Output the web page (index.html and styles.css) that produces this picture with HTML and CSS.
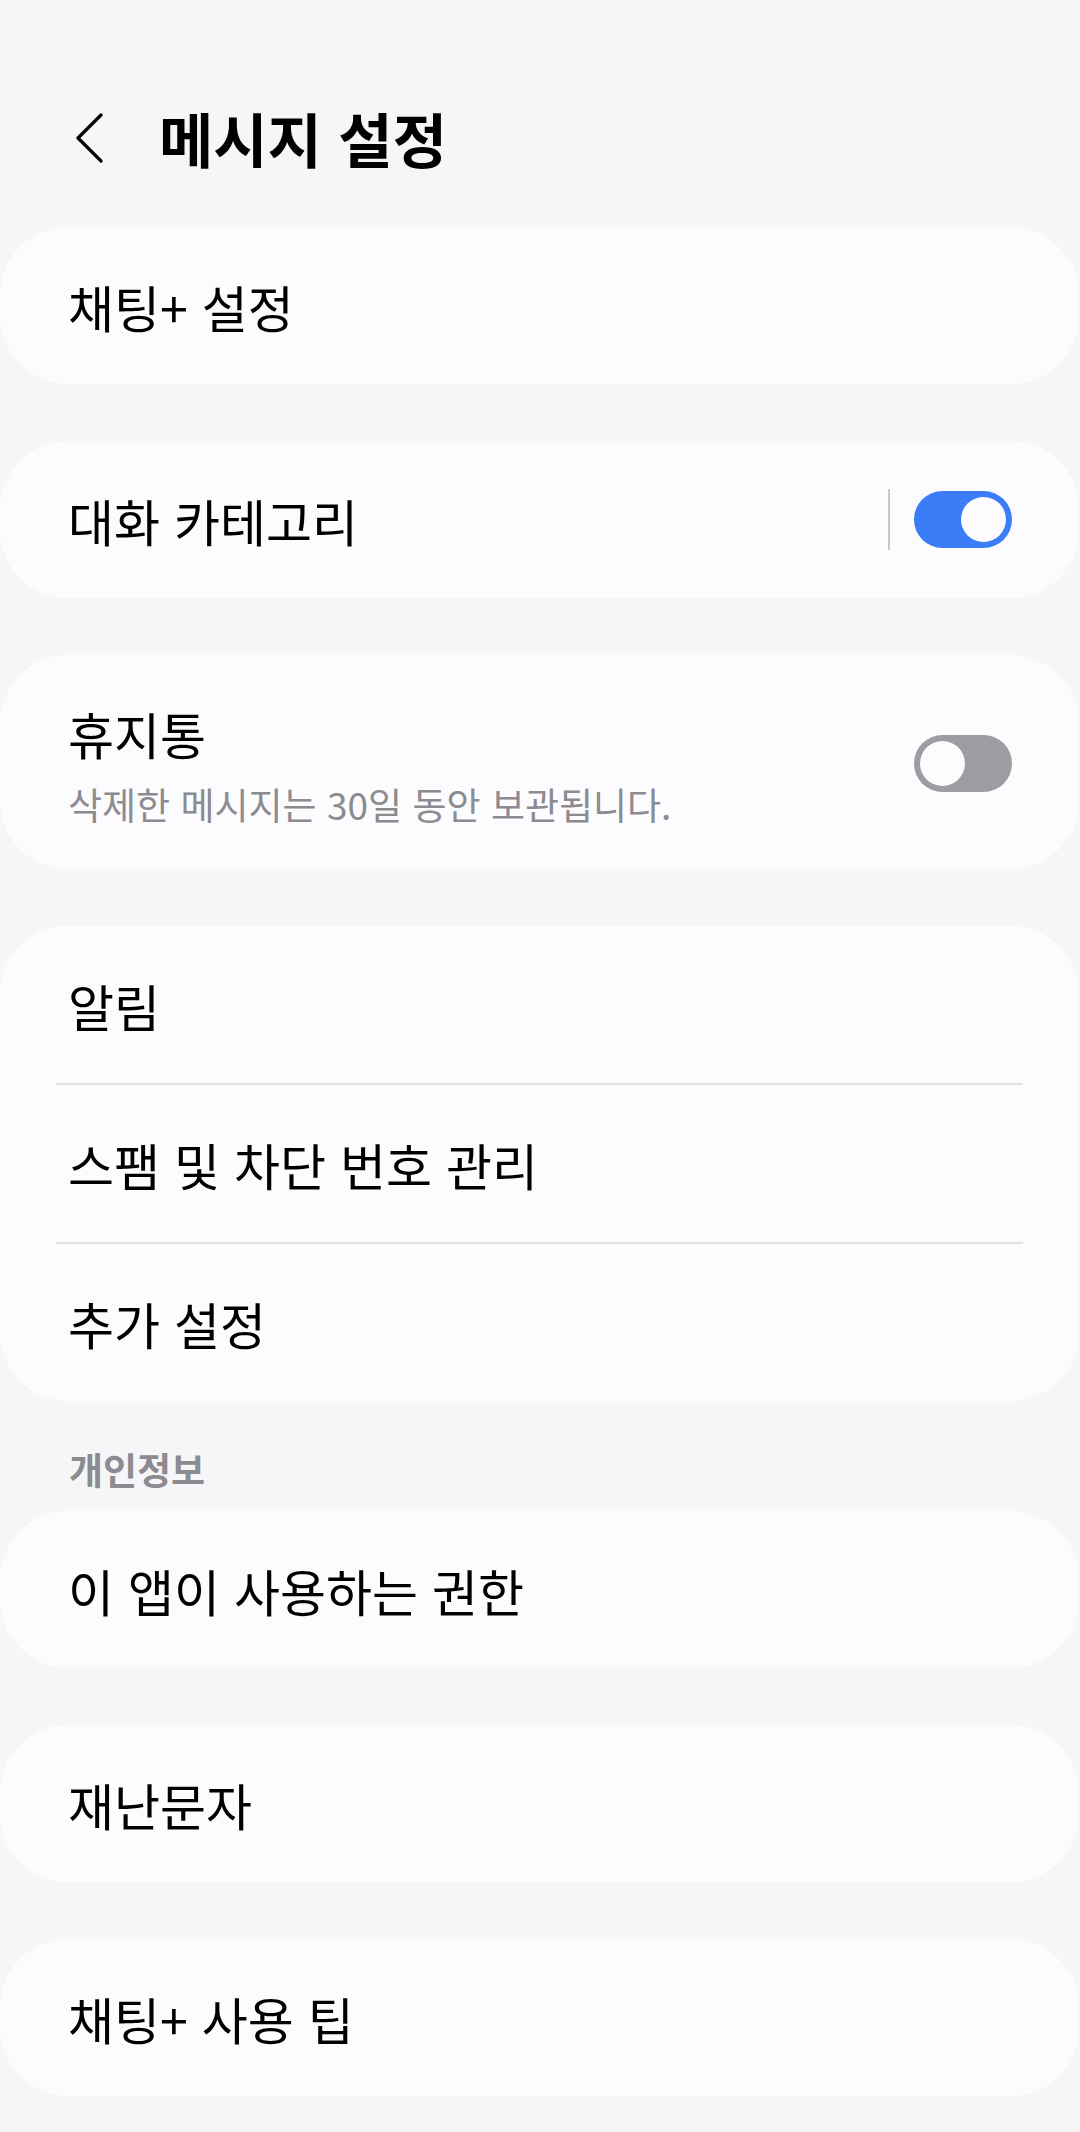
FILE: index.html
```html
<!DOCTYPE html>
<html lang="ko">
<head>
    <meta charset="UTF-8">
    <meta name="viewport" content="width=device-width, initial-scale=1.0">
    <title>메시지 설정</title>
    <link rel="stylesheet" href="styles.css">
</head>
<body>
    <header class="app-bar">
        <svg class="back" width="30" height="50" viewBox="0 0 30 50">
            <path d="M27 2 L4 25 L27 48" fill="none" stroke="#000" stroke-width="3.2" stroke-linecap="round" stroke-linejoin="round"/>
        </svg>
        <h1>메시지 설정</h1>
    </header>

    <main class="list">
        <div class="card">
            <div class="row"><span class="label">채팅+ 설정</span></div>
        </div>

        <div class="card">
            <div class="row">
                <span class="label">대화 카테고리</span>
                <span class="vline"></span>
                <span class="switch on"></span>
            </div>
        </div>

        <div class="card">
            <div class="row tall">
                <div class="texts">
                    <span class="label">휴지통</span>
                    <span class="sub">삭제한 메시지는 30일 동안 보관됩니다.</span>
                </div>
                <span class="switch"></span>
            </div>
        </div>

        <div class="card flush">
            <div class="row"><span class="label">알림</span></div>
            <hr class="divider">
            <div class="row"><span class="label">스팸 및 차단 번호 관리</span></div>
            <hr class="divider">
            <div class="row"><span class="label">추가 설정</span></div>
        </div>

        <div class="section-title">개인정보</div>

        <div class="card">
            <div class="row"><span class="label">이 앱이 사용하는 권한</span></div>
        </div>

        <div class="card">
            <div class="row"><span class="label">재난문자</span></div>
        </div>

        <div class="card">
            <div class="row"><span class="label">채팅+ 사용 팁</span></div>
        </div>
    </main>
</body>
</html>
```

FILE: styles.css
```css
body {
    margin: 0;
    padding: 0;
    background: #f6f6f8;
    color: #000;
    font-family: "Noto Sans CJK KR", "Noto Sans", sans-serif;
}
.app-bar {
    height: 227px;
    box-sizing: border-box;
    padding-top: 48px;
    display: flex;
    align-items: center;
}
.back {
    margin-left: 74px;
    flex-shrink: 0;
}
h1 {
    margin: 0 0 0 55px;
    font-size: 59px;
    font-weight: 700;
    line-height: 1;
}
.list {
    padding-bottom: 35px;
}
.card {
    background: #fcfcfe;
    border-radius: 68px;
    margin: 0 1px 57px 0;
    overflow: hidden;
}
.card.flush {
    margin-bottom: 0;
}
.row {
    height: 157px;
    box-sizing: border-box;
    padding: 0 67px 0 68px;
    display: flex;
    align-items: center;
}
.row.tall {
    height: 214px;
    padding-top: 48px;
    padding-bottom: 42px;
}
.label {
    font-size: 50px;
    line-height: 60px;
    flex: 1;
}
.texts {
    flex: 1;
    display: flex;
    flex-direction: column;
}
.sub {
    font-size: 37px;
    line-height: 46px;
    margin-top: 18px;
    color: #8b8b90;
}
.divider {
    margin: 0 56px;
    border: 0;
    height: 2px;
    background: #e2e2e6;
}
.vline {
    width: 2px;
    height: 61px;
    background: #c8c8cc;
    margin-right: 24px;
}
.switch {
    position: relative;
    width: 98px;
    height: 57px;
    border-radius: 29px;
    background: #9d9da1;
    flex-shrink: 0;
}
.switch::after {
    content: "";
    position: absolute;
    top: 6px;
    left: 6px;
    width: 45px;
    height: 45px;
    border-radius: 50%;
    background: #fcfcfe;
}
.switch.on {
    background: #3b7df6;
}
.switch.on::after {
    left: auto;
    right: 6px;
}
.row.tall .switch {
    margin-top: -4px;
}
.section-title {
    padding: 48px 0 22px 69px;
    font-size: 37px;
    line-height: 40px;
    font-weight: 700;
    color: #8b8b90;
}
```
